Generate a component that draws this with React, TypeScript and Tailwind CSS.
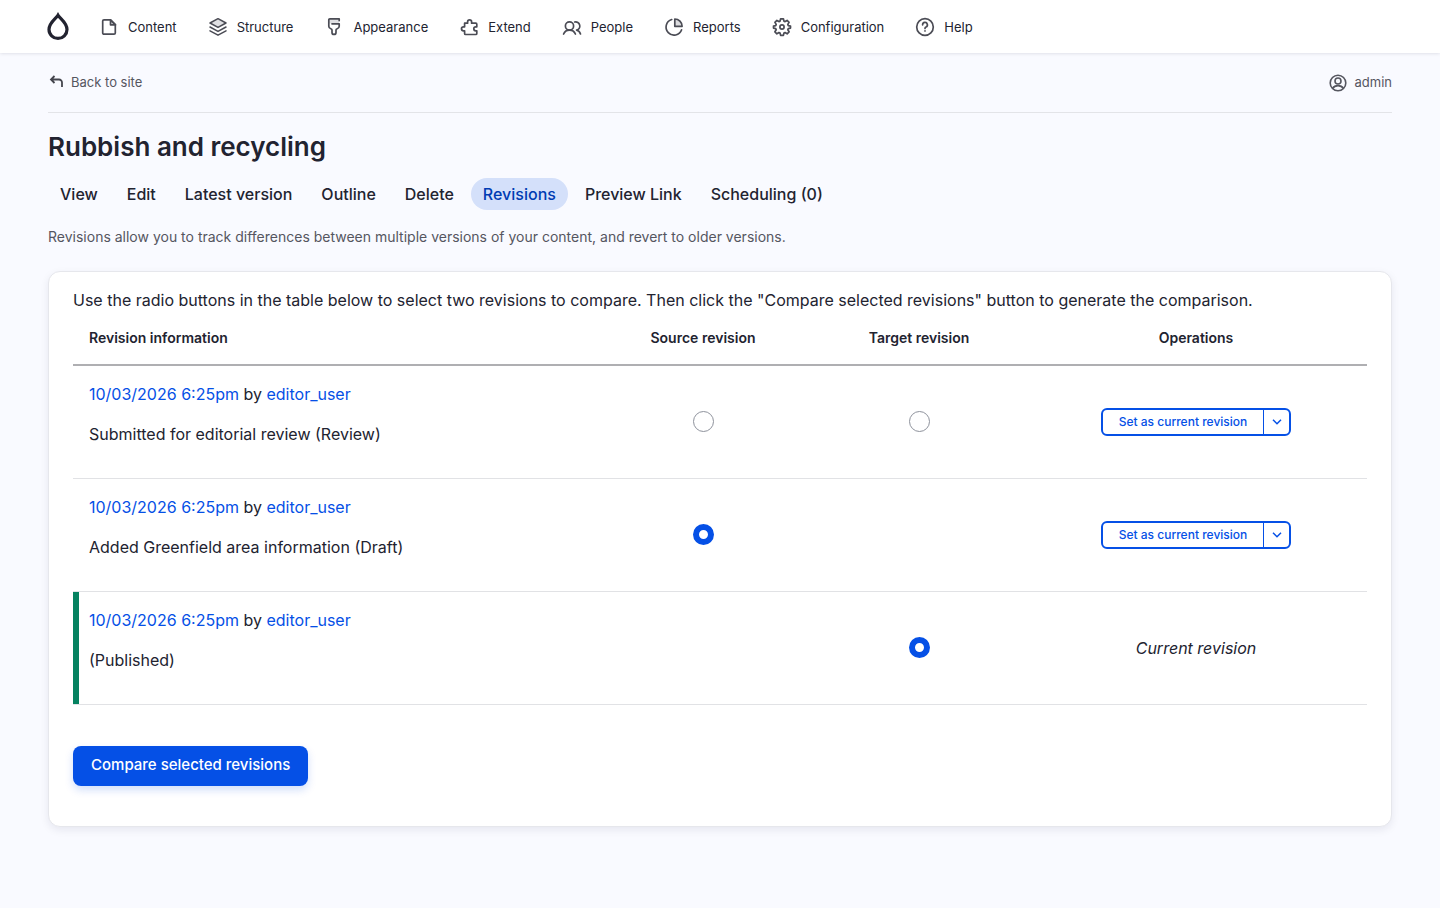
import { useState, type ReactNode } from 'react'

interface Revision {
  id:      number
  date:    string
  author:  string
  message: string
  current: boolean
}

const revisions: Revision[] = [
  { id: 3, date: '10/03/2026 6:25pm', author: 'editor_user', message: 'Submitted for editorial review (Review)',   current: false },
  { id: 2, date: '10/03/2026 6:25pm', author: 'editor_user', message: 'Added Greenfield area information (Draft)', current: false },
  { id: 1, date: '10/03/2026 6:25pm', author: 'editor_user', message: '(Published)',                               current: true },
]

const tabs = ['View', 'Edit', 'Latest version', 'Outline', 'Delete', 'Revisions', 'Preview Link', 'Scheduling (0)']

const Icon = ({ children }: { children: ReactNode }) => (
  <svg
    viewBox="0 0 20 20" aria-hidden="true"
    className="size-5 shrink-0 text-[#4b4c55]"
    fill="none" stroke="currentColor" strokeWidth="1.7" strokeLinecap="round" strokeLinejoin="round"
  >
    {children}
  </svg>
)

const menu: { label: string, icon: ReactNode }[] = [
  {
    label: 'Content',
    icon: <>
      <path d="M11.5 2.8v5h5z" fill="#dcdcdf" />
      <path d="M11.5 2.8H5a1.3 1.3 0 0 0-1.3 1.3v11.8A1.3 1.3 0 0 0 5 17.2h10a1.3 1.3 0 0 0 1.3-1.3V7.6z" />
    </>,
  },
  {
    label: 'Structure',
    icon: <>
      <path d="M10 1.7 18 6l-8 4.4L2 6z" fill="#e0e0e3" strokeWidth="1.5" />
      <path d="m2 10 8 4.4 8-4.4M2 13.8l8 4.4 8-4.4" strokeWidth="1.5" />
    </>,
  },
  {
    label: 'Appearance',
    icon: <>
      <path d="M5 2h10v4.5H5z" fill="#e0e0e3" stroke="none" />
      <path d="M15.2 3.6V1.9H5.8a1 1 0 0 0-1 1v6.3c0 1.5.8 2.2 2 2.5.8.2 1.200.6 1.200 1.400v2.300a2 2 0 0 0 4 0v-2.300c0-.8.4-1.200 1.200-1.400 1.200-.3 2-1 2-2.500V6.800H8" />
    </>,
  },
  {
    label: 'Extend',
    icon: <path d="M5.600 6.200h3V4.900a2 2 0 0 1 4 0v1.300h4.200a1 1 0 0 1 1 1v2.600h-1a2 2 0 0 0 0 4h1v2.700a1 1 0 0 1-1 1H6.600a1 1 0 0 1-1-1v-2.700H4.500a2 2 0 0 1 0-4h1.100z" />,
  },
  {
    label: 'People',
    icon: <>
      <circle cx="7.5" cy="9" r="4.1" />
      <path d="M1.6 17c1-2.500 3.200-3.900 5.900-3.900s4.900 1.400 5.900 3.900M12.700 5a4.100 4.100 0 1 1 1.900 8.100c1.800.3 3.200 1.700 3.900 3.900" />
    </>,
  },
  {
    label: 'Reports',
    icon: <>
      <path d="M10.8 2v7.300h7.300c0-4-3.300-7.300-7.300-7.300z" fill="#dcdcdf" />
      <path d="M7.700 2.500a8 8 0 1 0 9.900 10.300" />
    </>,
  },
  {
    label: 'Configuration',
    icon: <>
      <circle cx="10" cy="10" r="2.1" />
      <path d="m8.600 1.800-.5 2.300-1.200.5-2-1.200-2 2 1.300 2-.5 1.200-2.200.5v2l2.200.5.5 1.200-1.300 2 2 2 2-1.200 1.200.5.5 2.300h2.800l.5-2.300 1.200-.5 2 1.200 2-2-1.300-2 .5-1.200 2.200-.5v-2l-2.200-.5-.5-1.200 1.300-2-2-2-2 1.200-1.200-.5-.5-2.300z" />
    </>,
  },
  {
    label: 'Help',
    icon: <>
      <circle cx="10" cy="10" r="8.3" />
      <path d="M7.600 7.800a2.400 2.400 0 1 1 3.400 2.200c-.7.3-1 .7-1 1.400M10 13.900v.1" />
    </>,
  },
]

export default function App() {
  const [source, setSource] = useState(2)
  const [target, setTarget] = useState(1)

  const radioClass = 'block mx-auto size-[21px] appearance-none rounded-full border border-[#8e929c] bg-white checked:border-[6px] checked:border-[#0550e6]'

  return (
    <div className="min-h-screen bg-[#f9faff] font-[Inter,sans-serif] text-base text-[#222330]">
      <header className="relative bg-white shadow-[0_0_4px_rgba(0,0,40,0.16)]">
        <nav className="flex h-[53px] items-center px-[46px]">
          <a href="#" aria-label="Home" className="mr-[29px]">
            <svg viewBox="0 0 24 30" className="h-[30px] w-6" aria-hidden="true">
              <path d="M12 3.200C10.300 6.200 3 10.600 3 17.400a9 9 0 0 0 18 0C21 10.600 13.700 6.200 12 3.200z" fill="none" stroke="#222330" strokeWidth="3.2" />
            </svg>
          </a>
          <ul className="flex gap-[31px]">
            {menu.map(item => (
              <li key={item.label}>
                <a href="#" className="flex items-center gap-[9px] text-[13px] leading-5">
                  <Icon>{item.icon}</Icon>
                  {item.label}
                </a>
              </li>
            ))}
          </ul>
        </nav>
      </header>

      <div className="px-12">
        <div className="flex h-[60px] items-center justify-between border-b border-[#e3e4e8] text-[13px] text-[#55565f]">
          <a href="#" className="flex items-center gap-2">
            <svg viewBox="0 0 15 15" className="size-[15px]" fill="none" stroke="#44454d" strokeWidth="1.8" aria-hidden="true">
              <path d="M6.500 1 3 4.500 6.500 8M3 4.500h8a3 3 0 0 1 3 3V12" />
            </svg>
            Back to site
          </a>
          <a href="#" className="flex items-center gap-2">
            <svg viewBox="0 0 18 18" className="size-[18px]" fill="none" stroke="currentColor" strokeWidth="1.6" aria-hidden="true">
              <circle cx="9" cy="9" r="7.8" />
              <circle cx="9" cy="7" r="3" />
              <path d="M3.500 14.500c1.200-1.900 3.100-2.900 5.500-2.900s4.300 1 5.500 2.900" />
            </svg>
            admin
          </a>
        </div>

        <h1 className="mt-4 text-[26px] leading-9 font-semibold">Rubbish and recycling</h1>

        <nav className="mt-[13px] flex gap-[5px]">
          {tabs.map(tab => (
            <a
              key={tab} href="#"
              aria-current={tab === 'Revisions' ? 'page' : undefined}
              className="rounded-full px-3 py-1 font-medium aria-[current=page]:bg-[#d4e0fa] aria-[current=page]:text-[#003cb3]"
            >
              {tab}
            </a>
          ))}
        </nav>

        <p className="mt-4 text-sm leading-[22px] text-[#55565f]">
          Revisions allow you to track differences between multiple versions of your content, and revert to older versions.
        </p>

        <main className="mt-[23px] rounded-xl border border-[#e6e7ec] bg-white px-6 pt-4 pb-10 shadow-[0_3px_8px_rgba(0,0,60,0.08)]">
          <p>Use the radio buttons in the table below to select two revisions to compare. Then click the "Compare selected revisions" button to generate the comparison.</p>

          <table className="w-full table-fixed">
            <thead>
              <tr className="h-[53px] border-b-2 border-[#afafb2] text-sm">
                <th className="px-4 text-left font-semibold">Revision information</th>
                <th className="w-[220px] font-semibold">Source revision</th>
                <th className="w-[212px] font-semibold">Target revision</th>
                <th className="w-[342px] font-semibold">Operations</th>
              </tr>
            </thead>
            <tbody>
              {revisions.map(rev => (
                <tr key={rev.id} className="h-[113px] border-b border-[#e1e2e5]">
                  <td className={rev.current ? 'px-4 shadow-[inset_6px_0_0_#058260]' : 'px-4'}>
                    <p>
                      <a href="#" className="text-[#0550e6]">{rev.date}</a> by <a href="#" className="text-[#0550e6]">{rev.author}</a>
                    </p>
                    <p className="mt-4 mb-4">{rev.message}</p>
                  </td>
                  <td>
                    {!rev.current && (
                      <input
                        type="radio" name="source" aria-label="Source revision"
                        checked={source === rev.id} onChange={() => setSource(rev.id)}
                        className={radioClass}
                      />
                    )}
                  </td>
                  <td>
                    {rev.id !== source && (
                      <input
                        type="radio" name="target" aria-label="Target revision"
                        checked={target === rev.id} onChange={() => setTarget(rev.id)}
                        className={radioClass}
                      />
                    )}
                  </td>
                  <td className="text-center">
                    {rev.current ? <em>Current revision</em> : (
                      <div className="mx-auto flex h-7 w-fit rounded-md border-2 border-[#0550e6] text-xs font-medium text-[#0550e6]">
                        <button type="button" className="px-4">Set as current revision</button>
                        <button type="button" aria-label="List additional actions" className="flex w-[26px] items-center justify-center border-l border-[#0550e6]">
                          <svg viewBox="0 0 10 6" className="h-1.5 w-2.5" fill="none" stroke="currentColor" strokeWidth="1.5" aria-hidden="true">
                            <path d="m1 .8 4 4 4-4" />
                          </svg>
                        </button>
                      </div>
                    )}
                  </td>
                </tr>
              ))}
            </tbody>
          </table>

          <button type="button" className="mt-[41px] h-10 rounded-lg bg-[#0550e6] px-[18px] text-[15px] font-medium text-white shadow-[0_4px_8px_rgba(5,80,230,0.18)]">
            Compare selected revisions
          </button>
        </main>
      </div>
    </div>
  )
}
